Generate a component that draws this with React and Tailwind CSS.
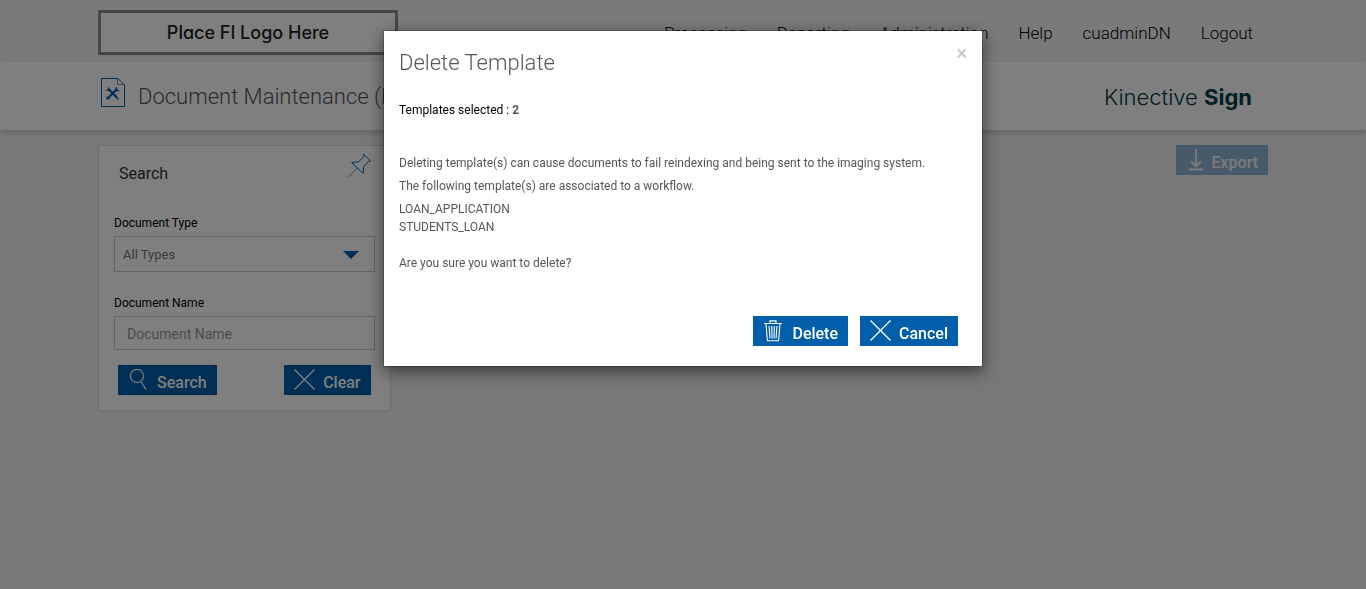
import React, { useState } from "react";

const NAV_LINKS = ["Processing", "Reporting", "Administration", "Help", "cuadminDN", "Logout"];

const TEMPLATES = ["LOAN_APPLICATION", "STUDENTS_LOAN"];

function DocumentIcon() {
  return (
    <svg width="24" height="29" viewBox="0 0 24 29" fill="none" stroke="#005ea8">
      <path d="M0.5 0.5H17L23.5 7V28.5H0.5Z" />
      <path d="M16.5 0.5V6.5H23.5" stroke="#6b8ea8" />
      <path d="M7.5 11L16 19.5M16 11L7.5 19.5" strokeWidth="2.2" />
      <path d="M5.5 12.2H8V9.5M15.5 9.2L15 12.3L18 12.8M6 18.5V20.8L9 20M14.5 19L17.5 21.2" strokeWidth="1.4" />
    </svg>
  );
}

function PinIcon() {
  return (
    <svg width="23" height="25" viewBox="0 0 23 25" fill="none" stroke="#005ea8">
      <path d="M15.5 1L22.5 8L20.4 8.6L15.5 14L15.3 20.5L3.6 9.5L10.5 8.8L16 3.4Z" />
      <path d="M9 15L0.5 24" stroke="#8a8f94" />
    </svg>
  );
}

function SearchIcon() {
  return (
    <svg width="21" height="22" viewBox="0 0 21 22" fill="none" stroke="currentColor" strokeWidth="1.2">
      <circle cx="9" cy="7" r="6.6" />
      <path d="M13 12.5L18 20.5" />
    </svg>
  );
}

function CrossIcon() {
  return (
    <svg width="21" height="22" viewBox="0 0 21 22" fill="none" stroke="currentColor" strokeWidth="1.3">
      <path d="M0.5 0.5L20.5 20.5M20.5 0.5L0.5 20.5" />
    </svg>
  );
}

function TrashIcon() {
  return (
    <svg width="21" height="22" viewBox="0 0 21 22" fill="none" stroke="currentColor" strokeWidth="1.1">
      <path d="M1 3.5H19M7 3.2V0.9H13V3.2" />
      <path d="M3 3.8L4.4 20.8H15.6L17 3.8" />
      <path d="M6 6L7 18.5M8.7 6L9 18.5M11.3 6L11 18.5M14 6L13 18.5" />
    </svg>
  );
}

function DownloadIcon() {
  return (
    <svg width="17" height="22" viewBox="0 0 17 22" fill="none" stroke="currentColor" strokeWidth="1.8">
      <path d="M10 0V17M5 12.5L10 17.5L15 12.5M3 20.5H17" />
    </svg>
  );
}

function ActionButton({ icon, label, disabled, onClick }) {
  return (
    <button
      type="button"
      onClick={onClick}
      disabled={disabled}
      className="flex h-[30px] items-start gap-2 bg-[#005eaa] px-[10px] text-base font-medium text-white disabled:opacity-40"
    >
      <span className="pt-1">{icon}</span>
      <span className="pt-[7px] leading-[22px]">{label}</span>
    </button>
  );
}

function Header() {
  return (
    <header className="bg-[#f4f4f4]">
      <div className="mx-auto flex h-[62px] max-w-[1170px] items-start justify-between pt-[10px]">
        <div className="flex h-[45px] w-[300px] items-center justify-center border-3 border-[#8c8c8c] bg-white font-[Inter] text-[18px] font-medium text-[#222] [font-feature-settings:'cv11']">
          Place FI Logo Here
        </div>
        <nav className="flex gap-[30px] pt-[11px] pr-[15px] text-[17px] font-light text-black">
          {NAV_LINKS.map((link) => (
            <a key={link} href="#">{link}</a>
          ))}
        </nav>
      </div>
    </header>
  );
}

function TitleBar() {
  return (
    <div className="bg-white shadow-[0_3px_5px_rgba(0,0,0,0.15)]">
      <div className="mx-auto flex h-[68px] max-w-[1170px] items-center justify-between pr-4 pl-[3px]">
        <div className="flex items-center gap-[13px]">
          <div className="pb-2">
            <DocumentIcon />
          </div>
          <h1 className="pt-[2px] text-[22px] leading-8 font-light text-[#54585a]">Document Maintenance (FI)</h1>
        </div>
        <div className="pt-[2px] font-[Inter] text-[22px] leading-8 font-light text-[#004043]">
          Kinective <span className="font-bold">Sign</span>
        </div>
      </div>
    </div>
  );
}

function SearchPanel() {
  const [type, setType] = useState("all");
  const [name, setName] = useState("");

  function clearForm() {
    setType("all");
    setName("");
  }

  return (
    <section className="w-1/4 border border-[#dcdcdc] bg-white px-[15px] pb-[15px]">
      <div className="flex h-[68px] items-start justify-between pt-[7px] pr-1 pl-[5px]">
        <h2 className="pt-[9px] text-base text-[#333]">Search</h2>
        <button type="button" aria-label="Pin search panel">
          <PinIcon />
        </button>
      </div>

      <label htmlFor="docType" className="block h-[22px] text-[12px] leading-[18px] text-black">Document Type</label>
      <div className="relative mb-[22px]">
        <select
          id="docType"
          value={type}
          onChange={(e) => setType(e.target.value)}
          className="h-9 w-full appearance-none border border-[#ccc] bg-white px-2 pt-[2px] text-[13px] text-[#777]"
        >
          <option value="all">All Types</option>
        </select>
        <svg width="16" height="8" viewBox="0 0 16 8" className="pointer-events-none absolute top-[15px] right-4">
          <path d="M0 0H16L8 8Z" fill="#005eaa" />
        </svg>
      </div>

      <label htmlFor="docName" className="block h-[22px] text-[12px] leading-[18px] text-black">Document Name</label>
      <input
        id="docName"
        type="text"
        value={name}
        onChange={(e) => setName(e.target.value)}
        placeholder="Document Name"
        className="mb-[15px] h-[34px] w-full border border-[#ccc] bg-white px-3 pt-[2px] text-sm placeholder:text-[#999]"
      />

      <div className="flex justify-between px-1">
        <ActionButton icon={<SearchIcon />} label="Search" />
        <ActionButton icon={<CrossIcon />} label="Clear" onClick={clearForm} />
      </div>
    </section>
  );
}

function DeleteModal({ onClose }) {
  return (
    <div className="fixed inset-0 z-10 bg-black/50">
      <div
        role="dialog"
        aria-modal="true"
        aria-labelledby="deleteTitle"
        className="mx-auto mt-[30px] max-w-[600px] border border-black/20 bg-white bg-clip-padding px-[15px] pb-5 text-[12px] text-[#54585a] shadow-[0_5px_15px_rgba(0,0,0,0.5)]"
      >
        <div className="flex items-start justify-between pt-[15px]">
          <h2 id="deleteTitle" className="pt-px text-[22px] leading-8 font-light">Delete Template</h2>
          <button
            type="button"
            aria-label="Close"
            onClick={onClose}
            className="text-[20px] leading-[14px] font-bold text-[#ccc]"
          >
            ×
          </button>
        </div>

        <p className="mt-[22px] leading-[18px] text-black">
          Templates selected : <b className="text-[#54585a]">{TEMPLATES.length}</b>
        </p>

        <div className="mt-[35px] leading-[18px]">
          <p className="mb-[5px]">
            Deleting template(s) can cause documents to fail reindexing and being sent to the imaging system.
          </p>
          <p className="mb-[5px]">The following template(s) are associated to a workflow.</p>
          <ul className="mb-[18px]">
            {TEMPLATES.map((t) => (
              <li key={t}>{t}</li>
            ))}
          </ul>
          <p>Are you sure you want to delete?</p>
        </div>

        <div className="mt-11 flex justify-end gap-3 pr-[9px]">
          <ActionButton icon={<TrashIcon />} label="Delete" />
          <ActionButton icon={<CrossIcon />} label="Cancel" onClick={onClose} />
        </div>
      </div>
    </div>
  );
}

export default function App() {
  const [showDelete, setShowDelete] = useState(true);

  return (
    <div className="min-h-screen bg-[#f1f1f1] font-[Roboto,sans-serif]">
      <Header />
      <TitleBar />
      <main className="mx-auto flex max-w-[1170px] items-start justify-between pt-[15px]">
        <SearchPanel />
        <ActionButton icon={<DownloadIcon />} label="Export" disabled />
      </main>
      {showDelete && <DeleteModal onClose={() => setShowDelete(false)} />}
    </div>
  );
}
